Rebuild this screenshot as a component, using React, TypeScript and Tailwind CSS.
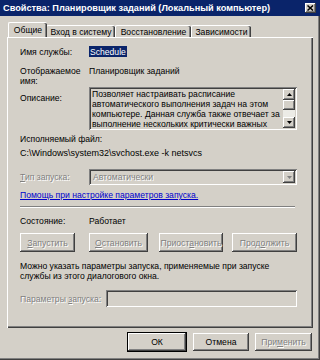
import React from "react";

const raised =
  "bg-[#d4d0c8] shadow-[inset_-1px_-1px_0_#404040,inset_1px_1px_0_#ffffff,inset_-2px_-2px_0_#808080]";
const sunken =
  "shadow-[inset_1px_1px_0_#808080,inset_-1px_-1px_0_#ffffff,inset_2px_2px_0_#404040,inset_-2px_-2px_0_#d4d0c8]";
const disabledText = "text-[#808080] [text-shadow:1px_1px_0_#ffffff]";

function Btn({
  label,
  width,
  disabled,
  isDefault,
}: {
  label: React.ReactNode;
  width: string;
  disabled?: boolean;
  isDefault?: boolean;
}) {
  return (
    <div
      className={`${width} h-full flex items-center justify-center whitespace-nowrap ${raised} ${
        isDefault ? "outline outline-1 outline-black" : ""
      } ${disabled ? disabledText : "text-black"}`}
    >
      {label}
    </div>
  );
}

function Tab({ label, active, width }: { label: string; active?: boolean; width: string }) {
  if (active) {
    return (
      <div
        className={`${width} h-[15px] -mr-[1px] relative z-10 flex items-center justify-center bg-[#d4d0c8] border-t border-l border-white shadow-[inset_-1px_0_0_#404040,inset_-2px_0_0_#808080] rounded-t-[2px]`}
      >
        {label}
      </div>
    );
  }
  return (
    <div
      className={`${width} h-[12px] flex items-center justify-center whitespace-nowrap border-t border-l border-white shadow-[inset_-1px_0_0_#404040,inset_-2px_0_0_#808080] rounded-t-[2px]`}
    >
      {label}
    </div>
  );
}

export default function App() {
  return (
    <div
      className="w-[320px] h-[360px] bg-[#d4d0c8] text-black text-[8.6px] leading-[10px] flex flex-col overflow-hidden shadow-[inset_-1px_-1px_0_#404040,inset_-2px_-2px_0_#808080]"
      style={{ fontFamily: '"Liberation Sans", Arial, sans-serif' }}
    >
      {/* title bar */}
      <div className="h-[16px] bg-[#0a246a] flex items-center pl-[3px] pr-[4px]">
        <span className="text-white font-bold text-[9.2px] whitespace-nowrap flex-1">
          Свойства: Планировщик заданий (Локальный компьютер)
        </span>
        <div className={`w-[11px] h-[10px] ${raised} flex items-center justify-center`}>
          <svg width="7" height="6" viewBox="0 0 7 6">
            <path d="M0.5 0.5 L6 5.5 M6 0.5 L0.5 5.5" stroke="#000" strokeWidth="1.5" />
          </svg>
        </div>
      </div>

      {/* tabs */}
      <div className="h-[21px] flex items-end pl-[8px] pt-[7px]">
        <Tab label="Общие" active width="w-[39px]" />
        <Tab label="Вход в систему" width="w-[69px]" />
        <Tab label="Восстановление" width="w-[76px]" />
        <Tab label="Зависимости" width="w-[60px]" />
      </div>

      {/* panel */}
      <div className="mx-[7px] h-[291px] border-t border-l border-white shadow-[inset_-1px_-1px_0_#404040,inset_-2px_-2px_0_#808080] pl-[12px] pr-[15px] flex flex-col">
        <div className="mt-[8px] h-[11px] flex items-center">
          <div className="w-[69px]">Имя службы:</div>
          <div className="bg-[#0a246a] text-white px-[1px] h-[11px] flex items-center">Schedule</div>
        </div>

        <div className="mt-[8px] h-[20px] flex">
          <div className="w-[69px] pt-[1px] whitespace-nowrap">
            Отображаемое
            <br />
            имя:
          </div>
          <div className="pt-[1px]">Планировщик заданий</div>
        </div>

        <div className="mt-[2px] flex">
          <div className="w-[69px] pt-[6px]">Описание:</div>
          <div className={`w-[208px] h-[43px] ${sunken} flex pl-[3px] pt-[2px] pr-[2px]`}>
            <div className="flex-1 overflow-hidden leading-[10px]">
              Позволяет настраивать расписание автоматического выполнения задач на этом компьютере. Данная служба также отвечает за выполнение нескольких критически важных
            </div>
            <div className="w-[12px] h-[39px] flex flex-col">
              <div className={`h-[11px] ${raised} flex items-center justify-center`}>
                <svg width="5" height="3" viewBox="0 0 5 3">
                  <path d="M2.5 0 L5 3 L0 3 Z" fill="#000" />
                </svg>
              </div>
              <div className={`h-[10px] ${raised}`} />
              <div className="flex-1 bg-[#ecebe6]" />
              <div className={`h-[11px] ${raised} flex items-center justify-center`}>
                <svg width="5" height="3" viewBox="0 0 5 3">
                  <path d="M0 0 L5 0 L2.5 3 Z" fill="#000" />
                </svg>
              </div>
            </div>
          </div>
        </div>

        <div className="mt-[4px] h-[10px]">Исполняемый файл:</div>
        <div className="mt-[4px] h-[10px] text-[9px]">C:\Windows\system32\svchost.exe -k netsvcs</div>

        <div className="mt-[11px] h-[16px] flex items-center">
          <div className={`w-[69px] ${disabledText}`}>
            <span className="underline">Т</span>ип запуска:
          </div>
          <div className={`w-[208px] h-[16px] ${sunken} flex items-center pl-[4px] pr-[2px]`}>
            <div className={`flex-1 ${disabledText}`}>Автоматически</div>
            <div className={`w-[12px] h-[12px] ${raised} flex items-center justify-center`}>
              <svg width="5" height="3" viewBox="0 0 5 3">
                <path d="M0 0 L5 0 L2.5 3 Z" fill="#808080" />
              </svg>
            </div>
          </div>
        </div>

        <div className="mt-[5px] h-[10px] text-[#0000cc] underline">
          Помощь при настройке параметров запуска.
        </div>

        <div className="mt-[6px] w-[275px] border-t border-[#808080] border-b border-b-white" />

        <div className="mt-[8px] h-[10px] flex">
          <div className="w-[69px]">Состояние:</div>
          <div>Работает</div>
        </div>

        <div className="mt-[7px] h-[19px] flex">
          <Btn
            width="w-[55px]"
            disabled
            label={
              <>
                <span className="underline">З</span>апустить
              </>
            }
          />
          <div className="ml-[14px]">
            <Btn
              width="w-[59px]"
              disabled
              label={
                <>
                  <span className="underline">О</span>становить
                </>
              }
            />
          </div>
          <div className="ml-[11px]">
            <Btn
              width="w-[64px]"
              disabled
              label={
                <>
                  Приост<span className="underline">а</span>новить
                </>
              }
            />
          </div>
          <div className="ml-[9px]">
            <Btn
              width="w-[65px]"
              disabled
              label={
                <>
                  Прод<span className="underline">о</span>лжить
                </>
              }
            />
          </div>
        </div>

        <div className="mt-[9px] h-[20px]">
          Можно указать параметры запуска, применяемые при запуске
          <br />
          службы из этого диалогового окна.
        </div>

        <div className="mt-[9px] h-[17px] flex items-center">
          <div className={`w-[86px] whitespace-nowrap ${disabledText}`}>
            Параметры <span className="underline">з</span>апуска:
          </div>
          <div className={`w-[191px] h-[17px] ${sunken}`} />
        </div>
      </div>

      {/* footer buttons */}
      <div className="mt-[5px] h-[18px] flex pl-[128px]">
        <Btn width="w-[58px]" isDefault label="ОК" />
        <div className="ml-[7px]">
          <Btn width="w-[56px]" label="Отмена" />
        </div>
        <div className="ml-[6px]">
          <Btn
            width="w-[57px]"
            disabled
            label={
              <>
                При<span className="underline">м</span>енить
              </>
            }
          />
        </div>
      </div>
    </div>
  );
}
